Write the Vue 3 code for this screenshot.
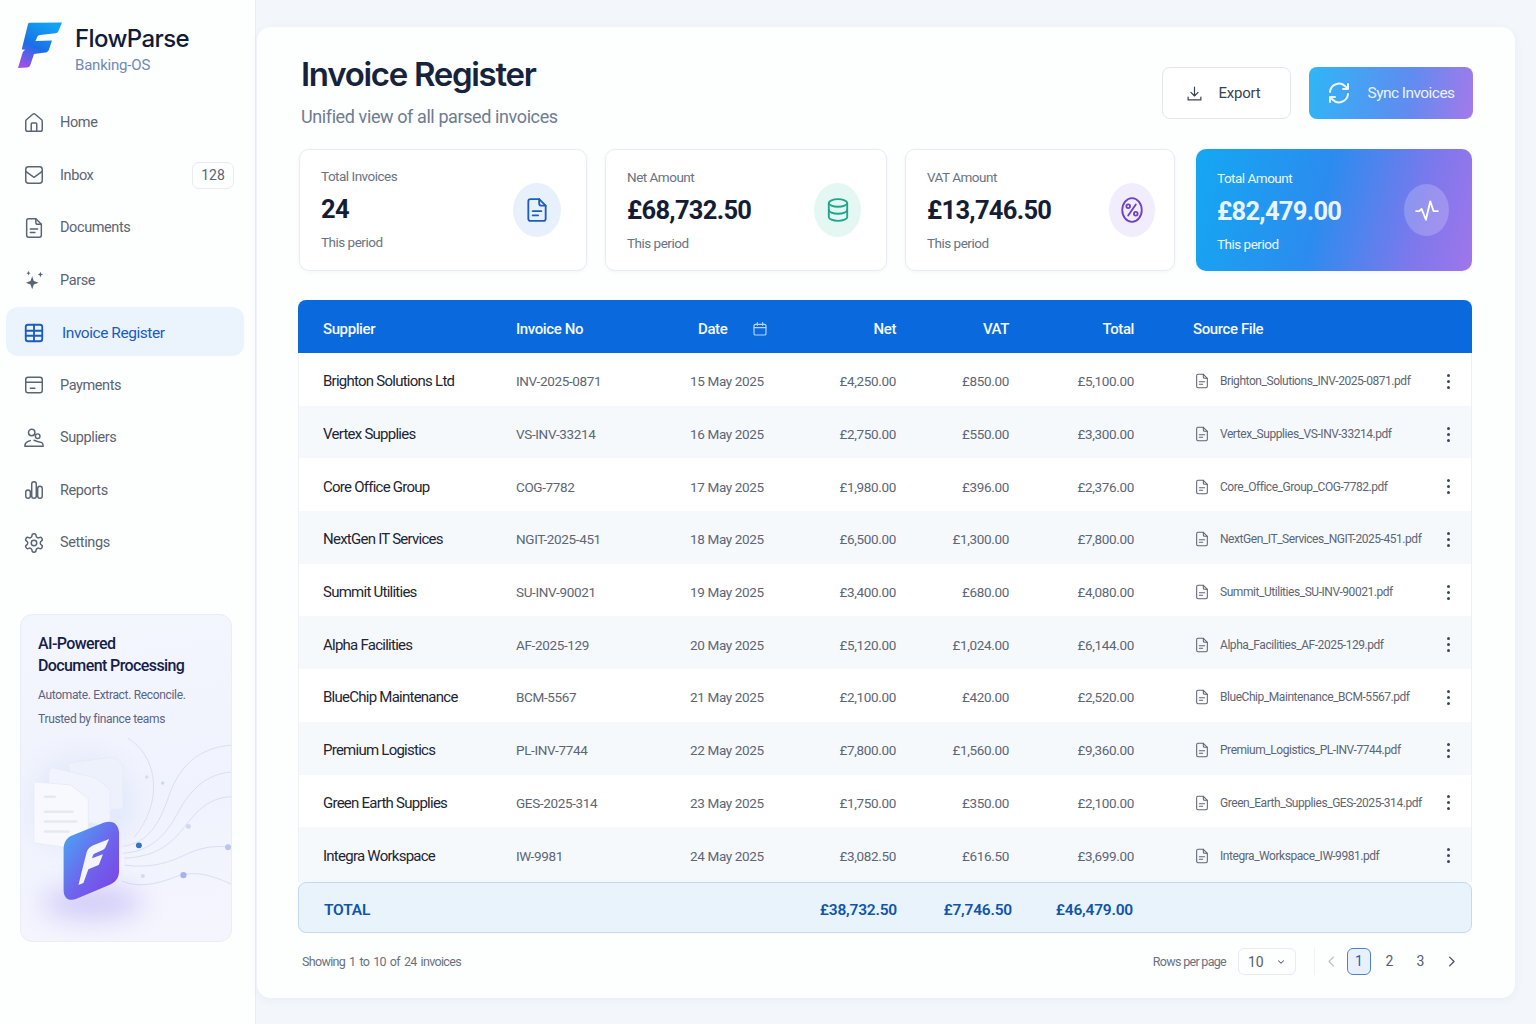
<script setup>
const icons = {
  home: '<path d="M15 21v-8a1 1 0 0 0-1-1h-4a1 1 0 0 0-1 1v8"/><path d="M3 10a2 2 0 0 1 .7-1.5l7-6a2 2 0 0 1 2.6 0l7 6A2 2 0 0 1 21 10v9a2 2 0 0 1-2 2H5a2 2 0 0 1-2-2z"/>',
  inbox: '<rect x="3" y="3" width="18" height="18" rx="3"/><path d="M3 8l9 6.5L21 8"/>',
  doc: '<path d="M14 2H6a2 2 0 0 0-2 2v16a2 2 0 0 0 2 2h12a2 2 0 0 0 2-2V8z"/><path d="M14 2v4a2 2 0 0 0 2 2h4"/><path d="M8 13h8M8 17h5"/>',
  spark: '<path fill="currentColor" stroke="none" d="M10 8l1.8 5.2L17 15l-5.2 1.8L10 22l-1.8-5.2L3 15l5.2-1.8z"/><path fill="currentColor" stroke="none" d="M19 3l.9 2.1L22 6l-2.1.9L19 9l-.9-2.1L16 6l2.1-.9zM6 2l.7 1.8 1.8.7-1.8.7L6 7l-.7-1.8-1.8-.7 1.8-.7z"/>',
  table: '<rect x="3" y="3" width="18" height="18" rx="2.5"/><path d="M3 9.5h18M3 15h18M12 3v18"/>',
  card: '<rect x="3" y="3.500" width="18" height="17" rx="2.5"/><path d="M3 9h18M8 15.5h5"/>',
  users: '<circle cx="9.5" cy="6" r="3.5"/><circle cx="16" cy="10" r="2.5"/><path d="M2 21c0-2.500 1-4 3-5l3-1.200M12 14.500l3 1 5.500 1.500c1 .5 1.500 2 1.500 4H2"/>',
  chart: '<rect x="3" y="12" width="5" height="9" rx="2.5"/><rect x="9.5" y="3" width="5" height="18" rx="2.5"/><rect x="16" y="8" width="5" height="13" rx="2.5"/>',
  gear: '<path d="M12.22 2h-.44a2 2 0 0 0-2 2v.18a2 2 0 0 1-1 1.73l-.43.25a2 2 0 0 1-2 0l-.15-.08a2 2 0 0 0-2.73.73l-.22.38a2 2 0 0 0 .73 2.73l.15.1a2 2 0 0 1 1 1.72v.51a2 2 0 0 1-1 1.74l-.15.09a2 2 0 0 0-.73 2.73l.22.38a2 2 0 0 0 2.73.73l.15-.08a2 2 0 0 1 2 0l.43.25a2 2 0 0 1 1 1.73V20a2 2 0 0 0 2 2h.44a2 2 0 0 0 2-2v-.18a2 2 0 0 1 1-1.73l.43-.25a2 2 0 0 1 2 0l.15.08a2 2 0 0 0 2.73-.73l.22-.39a2 2 0 0 0-.73-2.73l-.15-.08a2 2 0 0 1-1-1.74v-.5a2 2 0 0 1 1-1.74l.15-.09a2 2 0 0 0 .73-2.73l-.22-.38a2 2 0 0 0-2.73-.73l-.15.08a2 2 0 0 1-2 0l-.43-.25a2 2 0 0 1-1-1.73V4a2 2 0 0 0-2-2z"/><circle cx="12" cy="12" r="3"/>',
  db: '<ellipse cx="12" cy="5.5" rx="8.5" ry="3.5"/><path d="M3.5 5.5v13c0 1.900 3.800 3.500 8.500 3.500s8.500-1.600 8.500-3.500v-13"/><path d="M3.500 12c0 1.900 3.800 3.500 8.500 3.500s8.500-1.600 8.500-3.500"/>',
  percent: '<ellipse cx="12" cy="12" rx="9" ry="11"/><path d="M15.500 7l-7 10"/><circle cx="8.500" cy="8.500" r="1.700"/><circle cx="15.500" cy="15.500" r="1.700"/>',
  pulse: '<path d="M2 13h3l2-2 4 10 4-17 3 9h4"/>'
}

const nav = [
  { label: 'Home', icon: 'home' },
  { label: 'Inbox', icon: 'inbox', badge: '128' },
  { label: 'Documents', icon: 'doc' },
  { label: 'Parse', icon: 'spark' },
  { label: 'Invoice Register', icon: 'table', active: true },
  { label: 'Payments', icon: 'card' },
  { label: 'Suppliers', icon: 'users' },
  { label: 'Reports', icon: 'chart' },
  { label: 'Settings', icon: 'gear' }
]

const stats = [
  { label: 'Total Invoices', value: '24', icon: 'doc', tone: 'blue' },
  { label: 'Net Amount', value: '£68,732.50', icon: 'db', tone: 'green' },
  { label: 'VAT Amount', value: '£13,746.50', icon: 'percent', tone: 'violet' },
  { label: 'Total Amount', value: '£82,479.00', icon: 'pulse', tone: 'hero' }
]

const rows = [
  ['Brighton Solutions Ltd', 'INV-2025-0871', '15 May 2025', '£4,250.00', '£850.00', '£5,100.00', 'Brighton_Solutions_INV-2025-0871.pdf'],
  ['Vertex Supplies', 'VS-INV-33214', '16 May 2025', '£2,750.00', '£550.00', '£3,300.00', 'Vertex_Supplies_VS-INV-33214.pdf'],
  ['Core Office Group', 'COG-7782', '17 May 2025', '£1,980.00', '£396.00', '£2,376.00', 'Core_Office_Group_COG-7782.pdf'],
  ['NextGen IT Services', 'NGIT-2025-451', '18 May 2025', '£6,500.00', '£1,300.00', '£7,800.00', 'NextGen_IT_Services_NGIT-2025-451.pdf'],
  ['Summit Utilities', 'SU-INV-90021', '19 May 2025', '£3,400.00', '£680.00', '£4,080.00', 'Summit_Utilities_SU-INV-90021.pdf'],
  ['Alpha Facilities', 'AF-2025-129', '20 May 2025', '£5,120.00', '£1,024.00', '£6,144.00', 'Alpha_Facilities_AF-2025-129.pdf'],
  ['BlueChip Maintenance', 'BCM-5567', '21 May 2025', '£2,100.00', '£420.00', '£2,520.00', 'BlueChip_Maintenance_BCM-5567.pdf'],
  ['Premium Logistics', 'PL-INV-7744', '22 May 2025', '£7,800.00', '£1,560.00', '£9,360.00', 'Premium_Logistics_PL-INV-7744.pdf'],
  ['Green Earth Supplies', 'GES-2025-314', '23 May 2025', '£1,750.00', '£350.00', '£2,100.00', 'Green_Earth_Supplies_GES-2025-314.pdf'],
  ['Integra Workspace', 'IW-9981', '24 May 2025', '£3,082.50', '£616.50', '£3,699.00', 'Integra_Workspace_IW-9981.pdf']
]
</script>

<template>
  <div class="app">
    <aside class="sidebar">
      <div class="brand">
        <svg class="logo" viewBox="18 22 44 46">
          <defs>
            <linearGradient id="logoFill" x1="0.7" y1="0" x2="0.2" y2="1">
              <stop offset="0" stop-color="#12a4f4" />
              <stop offset="0.55" stop-color="#1a6fe8" />
              <stop offset="1" stop-color="#a14fe6" />
            </linearGradient>
          </defs>
          <path fill="url(#logoFill)" d="M28 24c.3-.8 1-1.200 2-1.200L62 22.500 58.500 31c-.5 1.300-1.500 2-3 2.200L40 35c-1.500.2-2.300.9-3 2.500L35.500 41 52 40.500l-3 9c-.6 1.700-1.800 2.700-3.500 3L34 54l-3.500 10.500c-.6 1.800-1.800 3-3.500 3.100L18 68l4.500-15c.5-1.700 1.600-2.800 3-3.300l-2.800-.2c-.6 0-1-.6-.7-1.300z" />
        </svg>
        <div>
          <div class="brand-name">FlowParse</div>
          <div class="brand-sub">Banking-OS</div>
        </div>
      </div>

      <nav class="nav">
        <a v-for="item in nav" :key="item.label" class="nav-item" :class="{ active: item.active }">
          <svg class="nav-icon" viewBox="0 0 24 24" v-html="icons[item.icon]"></svg>
          <span>{{ item.label }}</span>
          <b v-if="item.badge" class="badge">{{ item.badge }}</b>
        </a>
      </nav>

      <div class="promo">
        <svg class="promo-art" viewBox="0 0 212 328">
          <defs>
            <linearGradient id="tileFill" x1="0" y1="0" x2="1" y2="1">
              <stop offset="0" stop-color="#43aef5" />
              <stop offset="0.55" stop-color="#6f63ec" />
              <stop offset="1" stop-color="#7c3fe4" />
            </linearGradient>
            <filter id="soft" x="-60%" y="-100%" width="220%" height="300%"><feGaussianBlur stdDeviation="13" /></filter>
            <filter id="softer" x="-20%" y="-20%" width="140%" height="140%"><feGaussianBlur stdDeviation="0.8" /></filter>
          </defs>
          <g fill="none" stroke="#d5dcef" stroke-width="0.9">
            <path d="M108 124c28 16 38 62 6 100" />
            <path d="M103 233c26-4 36-22 46-50 10-30 30-50 63-52" />
            <path d="M103 240c30-2 44-20 56-42 12-22 28-38 53-40" />
            <path d="M105 245c34-2 48-16 62-34 12-16 26-28 45-28" />
            <path d="M105 252c28 4 48-4 64-12 16-7 30-8 43-6" />
            <path d="M102 268c18 8 38 2 56-5 20-6 36 0 54 8" />
          </g>
          <g fill="#b8c6e8">
            <circle cx="169" cy="213" r="2.5" opacity=".6" />
            <circle cx="143" cy="169" r="1.8" opacity=".6" />
            <circle cx="127" cy="163" r="1.8" opacity=".5" />
            <circle cx="123" cy="263" r="2" opacity=".5" />
            <circle cx="209" cy="234" r="3" />
          </g>
          <circle cx="119" cy="232" r="3" fill="#2f6ec0" />
          <circle cx="164" cy="262" r="3.2" fill="#a3b3ee" />
          <ellipse cx="62" cy="190" rx="52" ry="48" fill="#dfe6fa" opacity=".8" filter="url(#soft)" />
          <g filter="url(#softer)" stroke="#e6eaf7" stroke-width="0.8">
            <path fill="#edf1fb" d="M47 149l44-6c6 0 12 6 12 12v40l-40 4z" />
            <path fill="#f1f4fc" d="M28 159c0-4 3-6 6-5l42 10 14 12v37l-62-12z" />
            <path fill="#f8f9fe" d="M15 168l35 3 18 14v52l-53-7c-2 0-2-2-2-4v-56c0-1 1-2 2-2z" />
          </g>
          <path stroke="#e6e9f4" stroke-width="2.5" fill="none" d="M24 183h10M24 198h28M24 208h32M24 218h24" />
          <ellipse cx="72" cy="290" rx="50" ry="16" fill="#8f7bf0" opacity=".34" filter="url(#soft)" />
          <path fill="url(#tileFill)" d="M43 236c0-8 4-13 11-15l30-12c9-3 15 2 15 11v38c0 7-4 12-10 14l-33 14c-8 3-13-1-13-9z" />
          <path fill="#fff" opacity=".93" d="M66 240c1-4 3-6 7-8l16-6.500-4 9c-.5 1-1.300 1.700-2.500 2.100L75 240c-1.500.5-2 1.200-2.500 2.500l-.8 2.500 11-4-3.600 9.500c-.4 1-1.100 1.600-2 1.900L68 256l-5 14-5 2z" />
        </svg>
        <h3>AI-Powered<br>Document Processing</h3>
        <p>Automate. Extract. Reconcile.</p>
        <p>Trusted by finance teams</p>
      </div>
    </aside>

    <main class="panel">
      <header class="head">
        <div>
          <h1>Invoice Register</h1>
          <p class="subtitle">Unified view of all parsed invoices</p>
        </div>
        <div class="actions">
          <button class="btn">
            <svg viewBox="0 0 24 24"><path d="M12 3v12M7 10.5l5 5 5-5M3 17v4h18v-4" /></svg>
            Export
          </button>
          <button class="btn primary">
            <svg viewBox="0 0 24 24"><path d="M3 11a9 9 0 0 1 15.500-5.500L21 8M21 3v5h-5M21 13a9 9 0 0 1-15.500 5.500L3 16M3 21v-5h5" /></svg>
            Sync Invoices
          </button>
        </div>
      </header>

      <section class="stats">
        <div v-for="stat in stats" :key="stat.label" class="stat" :class="stat.tone">
          <div class="stat-text">
            <div class="stat-label">{{ stat.label }}</div>
            <div class="stat-value">{{ stat.value }}</div>
            <div class="stat-note">This period</div>
          </div>
          <span class="stat-icon">
            <svg viewBox="0 0 24 24" v-html="icons[stat.icon]"></svg>
          </span>
        </div>
      </section>

      <section class="table">
        <div class="row head-row">
          <span>Supplier</span>
          <span>Invoice No</span>
          <span class="date-head">Date
            <svg viewBox="0 0 24 24"><rect x="3" y="5" width="18" height="16" rx="2" /><path d="M3 10h18M8 2.5v4M16 2.5v4" /></svg>
          </span>
          <span class="num">Net</span>
          <span class="num">VAT</span>
          <span class="num">Total</span>
          <span class="source">Source File</span>
        </div>
        <div v-for="row in rows" :key="row[1]" class="row body-row">
          <span class="supplier">{{ row[0] }}</span>
          <span>{{ row[1] }}</span>
          <span>{{ row[2] }}</span>
          <span class="num">{{ row[3] }}</span>
          <span class="num">{{ row[4] }}</span>
          <span class="num">{{ row[5] }}</span>
          <span class="source file">
            <svg viewBox="0 0 24 24"><path d="M14 2H6a2 2 0 0 0-2 2v16a2 2 0 0 0 2 2h12a2 2 0 0 0 2-2V8z" /><path d="M14 2v4a2 2 0 0 0 2 2h4M8 13h8M8 17h5" /></svg>
            {{ row[6] }}
          </span>
          <span class="more"><i></i><i></i><i></i></span>
        </div>
        <div class="row total-row">
          <span>TOTAL</span>
          <span></span>
          <span></span>
          <span class="num">£38,732.50</span>
          <span class="num">£7,746.50</span>
          <span class="num">£46,479.00</span>
        </div>
      </section>

      <footer class="foot">
        <span class="showing">Showing 1 to 10 of 24 invoices</span>
        <div class="pager">
          <span class="rows-label">Rows per page</span>
          <span class="select">10
            <svg viewBox="0 0 24 24"><path d="M6 9l6 6 6-6" /></svg>
          </span>
          <span class="divider"></span>
          <svg class="chev off" viewBox="0 0 24 24"><path d="M15 5l-7 7 7 7" /></svg>
          <span class="page current">1</span>
          <span class="page">2</span>
          <span class="page">3</span>
          <svg class="chev next" viewBox="0 0 24 24"><path d="M9 5l7 7-7 7" /></svg>
        </div>
      </footer>
    </main>
  </div>
</template>

<style>
html, body {
  margin: 0;
  background: #f3f6fb;
  overflow: hidden;
}
</style>

<style scoped>
.app {
  display: flex;
  width: 1536px;
  height: 1024px;
  font-family: Roboto, "Noto Sans", sans-serif;
  color: #18233a;
  background: #f3f6fb;
}

svg {
  fill: none;
  stroke: currentColor;
  stroke-width: 1.7;
  stroke-linecap: round;
  stroke-linejoin: round;
}

.sidebar {
  width: 256px;
  flex: none;
  box-sizing: border-box;
  background: #fdfefe;
  border-right: 1px solid #e8ecf3;
  padding: 22px 11px 0 6px;
}

.brand {
  display: flex;
  align-items: flex-start;
  gap: 13px;
  padding-left: 12px;
  height: 74px;
}

.logo {
  width: 44px;
  height: 46px;
  stroke: none;
}

.brand-name {
  font-family: Inter, Roboto, sans-serif;
  font-size: 24px;
  font-weight: 500;
  letter-spacing: -0.6px;
  line-height: 34px;
  color: #0f1b3a;
}

.brand-sub {
  font-size: 15px;
  line-height: 18px;
  letter-spacing: -0.2px;
  color: #6f8ab4;
}

.nav {
  display: flex;
  flex-direction: column;
  margin-top: 1px;
}

.nav-item {
  display: flex;
  align-items: center;
  box-sizing: border-box;
  height: 49px;
  margin-bottom: 3.5px;
  padding: 2px 10px 0 17px;
  gap: 15px;
  font-size: 14.5px;
  letter-spacing: -0.4px;
  color: #5b6472;
  border-radius: 12px;
}

.nav-item.active {
  gap: 17px;
  font-size: 15.5px;
  letter-spacing: -0.45px;
  background: #ebf3fd;
  color: #1a5cc0;
}

.nav-icon {
  width: 22px;
  height: 22px;
  flex: none;
  stroke-width: 1.6;
}

.active .nav-icon {
  stroke-width: 2;
}

.badge {
  margin-left: auto;
  width: 42px;
  height: 27px;
  box-sizing: border-box;
  border: 1px solid #e8ecf1;
  border-radius: 7px;
  font-weight: 400;
  font-size: 14px;
  letter-spacing: 0;
  line-height: 25px;
  text-align: center;
}

.promo {
  position: relative;
  box-sizing: border-box;
  width: 212px;
  height: 328px;
  margin: 44px 0 0 14px;
  padding: 18px 17px 0;
  border: 1px solid #e9edf7;
  border-radius: 12px;
  background: linear-gradient(170deg, #f3f6fd, #f0f3fd 60%, #f5f5fe);
  overflow: hidden;
}

.promo-art {
  position: absolute;
  inset: 0;
  width: 100%;
  height: 100%;
  stroke: none;
}

.promo h3 {
  position: relative;
  margin: 0 0 6px;
  font-size: 16px;
  font-weight: 500;
  line-height: 22px;
  letter-spacing: -0.6px;
  color: #15204a;
}

.promo p {
  position: relative;
  margin: 0;
  font-size: 12px;
  line-height: 24px;
  letter-spacing: -0.33px;
  color: #596484;
}

.panel {
  flex: none;
  box-sizing: border-box;
  width: 1258px;
  height: 971px;
  margin: 27px 0 0 1px;
  padding: 24px 42px 0;
  background: #fdfefe;
  border-radius: 14px;
  box-shadow: 0 2px 10px rgba(60, 90, 140, 0.05);
}

.head {
  display: flex;
  justify-content: space-between;
  align-items: flex-start;
  height: 98px;
}

h1 {
  margin: 1px 0 0 2px;
  font-family: Inter, Roboto, sans-serif;
  font-size: 33px;
  font-weight: 600;
  letter-spacing: -1.3px;
  line-height: 44px;
  color: #16233f;
}

.subtitle {
  margin: 9px 0 0 2px;
  font-size: 18px;
  line-height: 24px;
  letter-spacing: -0.4px;
  color: #6f7c90;
}

.actions {
  display: flex;
  gap: 18px;
  margin-top: 16px;
}

.btn {
  display: flex;
  align-items: center;
  justify-content: center;
  gap: 15px;
  width: 129px;
  height: 52px;
  padding: 0 6px 0 0;
  box-sizing: border-box;
  border: 1px solid #e3e7ed;
  border-radius: 8px;
  background: #fff;
  font: inherit;
  font-size: 15px;
  letter-spacing: -0.2px;
  color: #3a4352;
}

.btn svg {
  width: 17px;
  height: 17px;
}

.btn.primary {
  width: 164px;
  padding: 0;
  border: none;
  gap: 16px;
  font-size: 15.5px;
  letter-spacing: -0.55px;
  background: linear-gradient(100deg, #2fb6f6, #5f8cf0 60%, #a479ea);
  color: #eaf3ff;
}

.btn.primary svg {
  width: 24px;
  height: 24px;
  stroke-width: 2;
}

.stats {
  display: grid;
  grid-template-columns: 288px 282px 270px 279px;
  column-gap: 18px;
}

.stat {
  display: flex;
  justify-content: space-between;
  align-items: center;
  box-sizing: border-box;
  height: 122px;
  padding: 0 25px 0 21px;
  background: #fff;
  border: 1px solid #e8ecf1;
  border-radius: 10px;
  box-shadow: 0 1px 4px rgba(70, 90, 130, 0.05);
}

.stat-text {
  padding-bottom: 3px;
}

.stat-label,
.stat-note {
  font-size: 13.5px;
  line-height: 18px;
  letter-spacing: -0.5px;
  color: #6a7382;
}

.stat-value {
  margin: 8px 0 8px;
  font-size: 25.5px;
  font-weight: 700;
  line-height: 32px;
  letter-spacing: -0.7px;
  color: #141d33;
}

.stat-icon {
  display: flex;
  align-items: center;
  justify-content: center;
  width: 48px;
  height: 54px;
  border-radius: 50%;
}

.stat-icon svg {
  width: 26px;
  height: 26px;
}

.blue .stat-icon { background: #e8f1fb; color: #1d5fb6; }
.green .stat-icon { width: 47px; background: #e5f7f2; color: #1fa58c; }
.violet { padding-right: 19px; }
.violet .stat-icon { width: 46px; background: #f2edfc; color: #7042c4; }
.green .stat-text,
.violet .stat-text { padding-top: 3px; }

.hero {
  margin-left: 3px;
  padding-right: 23px;
  border: none;
  color: #fff;
  background: linear-gradient(105deg, #14a8f2, #2b8cef 45%, #7f78ec 80%, #a076ea);
}

.hero .stat-text { padding-top: 5px; }
.hero .stat-label,
.hero .stat-note { color: #eef6ff; }
.hero .stat-value { color: #eaf5ff; }
.hero .stat-icon { background: rgba(255, 255, 255, 0.2); width: 45px; height: 52px; color: #fff; }

.table {
  margin-top: 29px;
  margin-left: -1px;
  width: 1174px;
  box-sizing: border-box;
}

.row {
  display: grid;
  grid-template-columns: 193px 174px 110px 96px 113px 125px minmax(0, 1fr) 46px;
  align-items: center;
  padding-left: 25px;
  box-sizing: border-box;
}

.num { text-align: right; }
.source { padding-left: 59px; }

.head-row {
  height: 53px;
  padding-top: 4px;
  background: #0a69dc;
  color: #f4f9ff;
  font-size: 15px;
  font-weight: 500;
  letter-spacing: -0.4px;
  border-radius: 8px 8px 0 0;
}

.date-head {
  display: flex;
  align-items: center;
  padding-left: 8px;
  gap: 25px;
}

.date-head svg {
  width: 16px;
  height: 16px;
  color: #b9d6f8;
}

.body-row {
  height: 52.7px;
  padding-top: 4px;
  padding-left: 24px;
  font-size: 13.5px;
  letter-spacing: -0.35px;
  color: #5d6674;
  background: #fff;
  border-left: 1px solid #edf0f5;
  border-right: 1px solid #edf0f5;
}

.body-row:nth-child(odd) {
  background: #f6f9fc;
}

.body-row:nth-child(11) {
  height: 55px;
  padding-bottom: 2.3px;
}

.supplier {
  font-size: 15px;
  letter-spacing: -0.75px;
  color: #1d2534;
}

.file {
  display: flex;
  align-items: center;
  gap: 10px;
  font-size: 12px;
  letter-spacing: -0.45px;
  white-space: nowrap;
}

.file svg {
  width: 16px;
  height: 16px;
  flex: none;
  margin-left: 1px;
  stroke-width: 1.6;
}

.more {
  display: flex;
  flex-direction: column;
  align-items: center;
  gap: 3px;
}

.more i {
  width: 3px;
  height: 3px;
  border-radius: 50%;
  background: #3e4656;
}

.total-row {
  height: 51px;
  padding-top: 4px;
  background: #e9f3fc;
  border: 1px solid #c3d9ef;
  border-radius: 8px;
  color: #0f55ad;
  font-size: 15.5px;
  font-weight: 600;
  letter-spacing: -0.2px;
}

.total-row span:nth-child(5) { margin-right: -2px; }
.total-row span:nth-child(6) { margin-right: 2px; }

.foot {
  display: flex;
  justify-content: space-between;
  align-items: center;
  margin-top: 15px;
  height: 27px;
}

.showing {
  margin-left: 3px;
  font-size: 12.5px;
  word-spacing: 1.5px;
  letter-spacing: -0.66px;
  color: #6a7280;
}

.pager {
  display: flex;
  align-items: center;
  margin-right: 14px;
  font-size: 14px;
  color: #555e6c;
}

.rows-label {
  font-size: 12.5px;
  letter-spacing: -0.7px;
  color: #6a7280;
}

.select {
  display: flex;
  align-items: center;
  justify-content: space-between;
  box-sizing: border-box;
  width: 58px;
  height: 27px;
  margin-left: 12px;
  padding: 0 9px;
  border: 1px solid #e8ecf1;
  border-radius: 6px;
}

.select svg {
  width: 10px;
  height: 10px;
  stroke-width: 2.5;
}

.divider {
  width: 1px;
  height: 27px;
  margin: 0 9px 0 18px;
  background: #f0f2f6;
}

.chev {
  width: 15px;
  height: 15px;
  color: #474f5e;
  stroke-width: 2;
}

.chev.off { color: #b9c0ca; }
.chev.next { margin-left: 11px; }

.page {
  width: 25px;
  height: 27px;
  margin-left: 6px;
  box-sizing: border-box;
  line-height: 27px;
  text-align: center;
}

.page.current {
  width: 24px;
  margin-left: 8px;
  line-height: 25px;
  border: 1.5px solid #4d83c8;
  border-radius: 6px;
  background: #e8f1fb;
  color: #1d5fb6;
}
</style>
